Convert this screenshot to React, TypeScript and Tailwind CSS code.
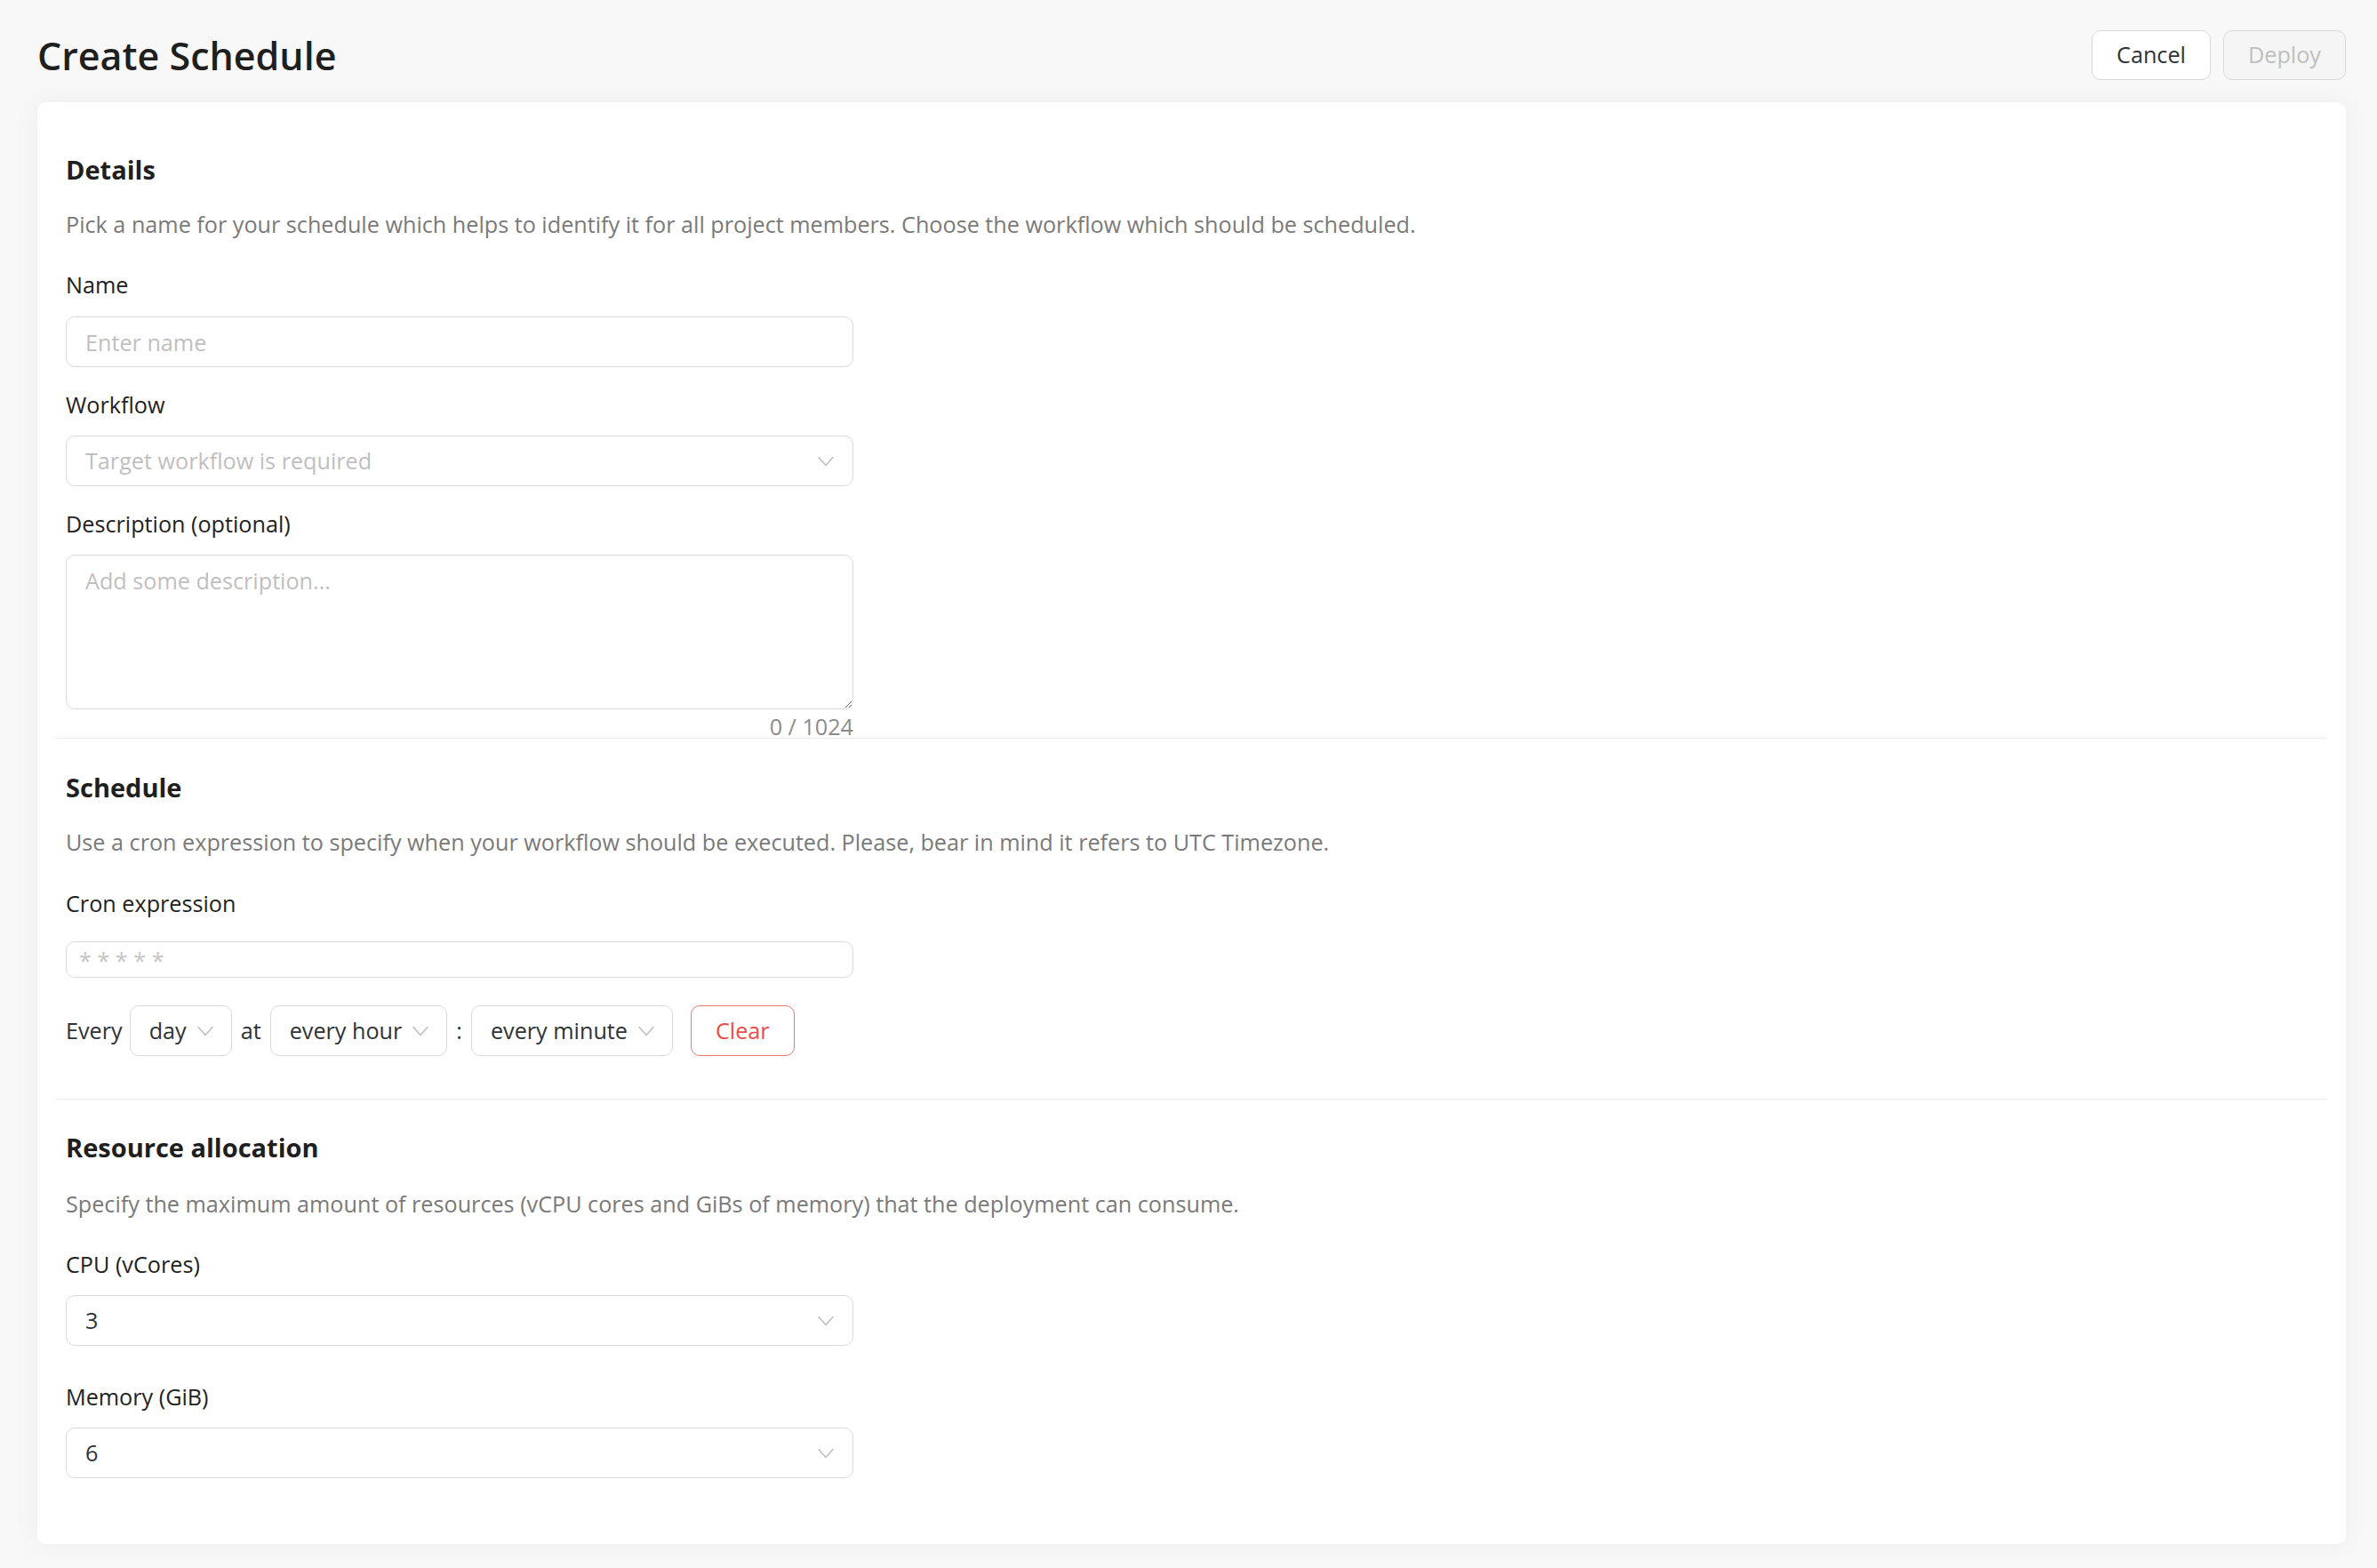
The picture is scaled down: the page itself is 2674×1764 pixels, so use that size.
import React from "react";

function Chevron() {
  return (
    <svg width="18" height="12" viewBox="0 0 18 12" fill="none" className="shrink-0">
      <path d="M1 1.5 L9 10.5 L17 1.5" stroke="#bfbfbf" strokeWidth="1.6" strokeLinecap="round" strokeLinejoin="round" />
    </svg>
  );
}

function SelectBox({ value, placeholder }: { value?: string; placeholder?: string }) {
  return (
    <div className="mt-[16px] flex h-[57px] w-[886px] items-center justify-between rounded-[10px] border border-[#d9d9d9] bg-white pl-[21px] pr-[21px]">
      {value ? (
        <span className="text-[25.2px] text-[#2e3338]">{value}</span>
      ) : (
        <span className="text-[25.2px] text-[#bfbfbf]">{placeholder}</span>
      )}
      <Chevron />
    </div>
  );
}

function MiniSelect({ value }: { value: string }) {
  return (
    <div className="flex h-[57px] items-center gap-[12px] rounded-[10px] border border-[#d9d9d9] bg-white pl-[21px] pr-[20px]">
      <span className="text-[25.2px] text-[#2e3338]">{value}</span>
      <Chevron />
    </div>
  );
}

function Heading({ children }: { children: React.ReactNode }) {
  return <h2 className="text-[29px] font-bold leading-[44px] text-[#1f1f1f]">{children}</h2>;
}

function Desc({ children, className }: { children: React.ReactNode; className: string }) {
  return <p className={`text-[25.2px] leading-[38px] text-[#7a7a7a] ${className}`}>{children}</p>;
}

function Label({ children, className }: { children: React.ReactNode; className: string }) {
  return <div className={`text-[25.2px] leading-[38px] text-[#222222] ${className}`}>{children}</div>;
}

export default function App() {
  return (
    <div className="min-h-screen bg-[#f8f8f8] pb-[27px] pl-[42px] pr-[35px] pt-[34px] font-['Open_Sans',sans-serif]">
      <div className="flex h-[56px] items-center justify-between">
        <h1 className="text-[43px] font-semibold leading-none text-[#1f1f1f]">Create Schedule</h1>
        <div className="flex items-center gap-[14px]">
          <button className="h-[56px] w-[134px] rounded-[10px] border border-[#d9d9d9] bg-white text-[25.2px] text-[#2e3338]">
            Cancel
          </button>
          <button className="h-[56px] w-[138px] rounded-[10px] border border-[#d9d9d9] bg-[#f5f5f5] text-[25.2px] text-[#bfbfbf]">
            Deploy
          </button>
        </div>
      </div>

      <div className="mt-[25px] rounded-[10px] bg-white p-[21px] shadow-[0_0_30px_rgba(0,0,0,0.05)]">
        <section className="border-b border-[#ececec] px-[11px] pt-[33px]">
          <Heading>Details</Heading>
          <Desc className="mt-[20px]">
            Pick a name for your schedule which helps to identify it for all project members. Choose the workflow which should be scheduled.
          </Desc>
          <Label className="mt-[30px]">Name</Label>
          <input
            placeholder="Enter name"
            className="mt-[17px] block h-[57px] w-[886px] rounded-[10px] border border-[#d9d9d9] bg-white px-[21px] text-[25.2px] text-[#2e3338] outline-none placeholder:text-[#bfbfbf]"
          />
          <Label className="mt-[23px]">Workflow</Label>
          <SelectBox placeholder="Target workflow is required" />
          <Label className="mt-[23px]">Description (optional)</Label>
          <div className="flex w-[886px] flex-col">
            <textarea
              placeholder="Add some description..."
              className="mt-[16px] block h-[174px] w-[886px] rounded-[10px] border border-[#d9d9d9] bg-white px-[21px] pt-[9px] text-[25.2px] leading-[38px] text-[#2e3338] outline-none placeholder:text-[#bfbfbf]"
            />
            <div className="mt-[7px] text-right text-[25.2px] leading-[25px] text-[#8c8c8c]">0 / 1024</div>
          </div>
        </section>

        <section className="border-b border-[#ececec] px-[11px] pb-[48px] pt-[33px]">
          <Heading>Schedule</Heading>
          <Desc className="mt-[20px]">
            Use a cron expression to specify when your workflow should be executed. Please, bear in mind it refers to UTC Timezone.
          </Desc>
          <Label className="mt-[31px]">Cron expression</Label>
          <input
            placeholder="* * * * *"
            className="mt-[24px] block h-[41px] w-[886px] rounded-[10px] border border-[#d9d9d9] bg-white px-[14px] text-[25.2px] text-[#2e3338] outline-none placeholder:text-[#c4c4c4]"
          />
          <div className="mt-[31px] flex h-[57px] items-center gap-[10px] text-[25.2px] text-[#2e3338]">
            <span className="mr-[-2px]">Every</span>
            <MiniSelect value="day" />
            <span>at</span>
            <MiniSelect value="every hour" />
            <span>:</span>
            <MiniSelect value="every minute" />
            <button className="ml-[10px] h-[57px] rounded-[10px] border border-[#f07575] bg-white px-[27px] text-[25.2px] text-[#eb4d4b]">
              Clear
            </button>
          </div>
        </section>

        <section className="px-[11px] pb-[53px] pt-[32px]">
          <Heading>Resource allocation</Heading>
          <Desc className="mt-[22px]">
            Specify the maximum amount of resources (vCPU cores and GiBs of memory) that the deployment can consume.
          </Desc>
          <Label className="mt-[30px]">CPU (vCores)</Label>
          <div className="mt-[1px]">
            <SelectBox value="3" />
          </div>
          <Label className="mt-[38px]">Memory (GiB)</Label>
          <div className="mt-[1px]">
            <SelectBox value="6" />
          </div>
        </section>
      </div>
    </div>
  );
}
